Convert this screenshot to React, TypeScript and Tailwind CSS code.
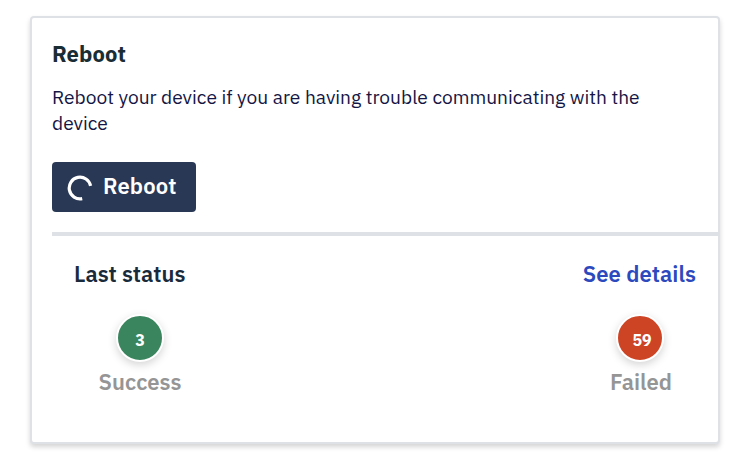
function Spinner() {
  return (
    <svg className="size-[26px] shrink-0" viewBox="0 0 26 26" fill="none">
      <path d="M23.6 10.9A10.8 10.8 0 1 0 15.2 23.6" stroke="#fff" strokeWidth="3.2" />
    </svg>
  );
}

type StatusProps = { count: number; label: string; badge: string; text: string; number: string };

function Status({ count, label, badge, text, number }: StatusProps) {
  return (
    <div className="flex w-[96px] flex-col items-center">
      <div
        className={`flex size-12 items-center justify-center rounded-full border-2 border-white text-[16px] leading-5 font-bold text-white shadow-[0_3px_8px_rgba(0,0,0,0.17)] ${badge}`}
      >
        <span className={number}>{count}</span>
      </div>
      <div className={`mt-[6px] text-[22px] leading-7 font-semibold whitespace-nowrap text-[#959595] ${text}`}>{label}</div>
    </div>
  );
}

export default function App() {
  return (
    <main className="h-[460px] w-[742px] overflow-hidden bg-white px-[30px] pt-4 font-['IBM_Plex_Sans','Roboto',sans-serif]">
      <section className="h-[428px] w-[690px] rounded-[4px] border-2 border-[#dee2e6] bg-white pl-5 shadow-[0_3px_5px_rgba(0,0,0,0.17)]">
        <h1 className="pt-[22px] text-[22px] leading-[28px] font-bold tracking-[0.1px] text-[#192d35]">Reboot</h1>
        <p className="mt-4 text-[19.2px] leading-[26px] text-[#141645]">
          <span className="block whitespace-nowrap">Reboot your device if you are having trouble communicating with the</span>
          <span className="block">device</span>
        </p>
        <button className="mt-[26px] flex h-[50px] w-[144px] items-center rounded-[4px] bg-[#293855] pl-[15px] text-[22px] leading-7 font-semibold tracking-[0.15px] text-white">
          <span className="mt-[2px]">
            <Spinner />
          </span>
          <span className="mb-[2px] ml-[10px]">Reboot</span>
        </button>
        <div className="mt-5 border-t-4 border-[#dee2e6] pr-[22px] pl-[22px]">
          <div className="flex justify-between pt-6 text-[22px] leading-7 font-semibold whitespace-nowrap text-[#192b3a]">
            <h2>Last status</h2>
            <a className="tracking-[0.05px] text-[#2c49bd]">See details</a>
          </div>
          <div className="flex justify-between pt-[26px] pr-[8px] pl-[18px]">
            <Status count={3} label="Success" badge="bg-[#3b855e]" text="" number="mt-1" />
            <Status count={59} label="Failed" badge="bg-[#cd4425]" text="pl-[2px]" number="mt-1 ml-1" />
          </div>
        </div>
      </section>
    </main>
  );
}
